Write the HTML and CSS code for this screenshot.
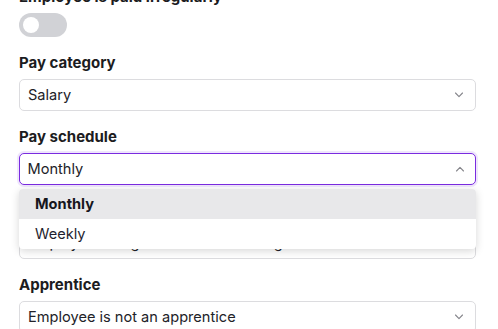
FILE: index.html
```html
<!DOCTYPE html>
<html>
<head>
<meta charset="utf-8">
<link rel="stylesheet" href="styles.css">
</head>
<body>
<div class="form">
  <div class="field">
    <div class="label">Employee is paid irregularly</div>
    <div class="toggle"><span class="knob"></span></div>
  </div>
  <div class="field">
    <div class="label">Pay category</div>
    <div class="select">
      <span class="value">Salary</span>
      <svg class="chev" width="10" height="6" viewBox="0 0 10 6"><path d="M1.5 1 L5 4.6 L8.5 1" fill="none" stroke="#85858b" stroke-width="1.1" stroke-linecap="round" stroke-linejoin="round"/></svg>
    </div>
  </div>
  <div class="field open">
    <div class="label">Pay schedule</div>
    <div class="select focused">
      <span class="value">Monthly</span>
      <svg class="chev" width="10" height="6" viewBox="0 0 10 6"><path d="M1.5 5 L5 1.4 L8.5 5" fill="none" stroke="#85858b" stroke-width="1.1" stroke-linecap="round" stroke-linejoin="round"/></svg>
    </div>
    <div class="menu">
      <div class="option selected">Monthly</div>
      <div class="option">Weekly</div>
    </div>
  </div>
  <div class="field">
    <div class="label">Leave loading</div>
    <div class="select">
      <span class="value">Employee is eligible for leave loading</span>
      <svg class="chev" width="10" height="6" viewBox="0 0 10 6"><path d="M1.5 1 L5 4.6 L8.5 1" fill="none" stroke="#85858b" stroke-width="1.1" stroke-linecap="round" stroke-linejoin="round"/></svg>
    </div>
  </div>
  <div class="field">
    <div class="label">Apprentice</div>
    <div class="select">
      <span class="value">Employee is not an apprentice</span>
      <svg class="chev" width="10" height="6" viewBox="0 0 10 6"><path d="M1.5 1 L5 4.6 L8.5 1" fill="none" stroke="#85858b" stroke-width="1.1" stroke-linecap="round" stroke-linejoin="round"/></svg>
    </div>
  </div>
</div>
</body>
</html>
```
FILE: styles.css
```css
html, body {
  margin: 0;
  padding: 0;
  background: #ffffff;
  overflow: hidden;
}
body {
  font-family: Inter, "Noto Sans", sans-serif;
  color: #1f1f24;
}
.form {
  margin-top: -13px;
  padding: 0 22px 0 19px;
  display: flex;
  flex-direction: column;
  gap: 16px;
}
.field {
  display: flex;
  flex-direction: column;
  gap: 6px;
  position: relative;
}
.label {
  font-size: 15px;
  line-height: 20px;
  font-weight: 700;
  color: #1c1c21;
}
.toggle {
  width: 48px;
  height: 24px;
  border-radius: 12px;
  background: #d1d2d6;
  display: flex;
  align-items: center;
  padding-left: 4px;
  box-sizing: border-box;
}
.knob {
  width: 16px;
  height: 16px;
  border-radius: 50%;
  background: #ffffff;
}
.select {
  height: 32px;
  box-sizing: border-box;
  border: 1px solid #dcdcdf;
  border-radius: 5px;
  display: flex;
  align-items: center;
  justify-content: space-between;
  padding: 0 11px 0 8px;
  font-size: 14.6px;
  color: #222228;
  background: #fff;
}
.select.focused {
  border: 1.5px solid #7a2be0;
  box-shadow: 0 0 0 2px #efe6fc;
  padding-left: 7.5px;
  padding-right: 10.5px;
}
.value {
  white-space: nowrap;
}
.menu {
  position: absolute;
  left: 0;
  right: 0;
  top: 62px;
  background: #ffffff;
  border-radius: 4px;
  box-shadow: 0 2px 8px rgba(0, 0, 0, 0.16);
  z-index: 5;
  overflow: hidden;
}
.option {
  height: 30px;
  display: flex;
  align-items: center;
  padding-left: 16px;
  font-size: 14.6px;
  color: #1f1f30;
}
.option.selected {
  background: #e8e8ea;
  font-weight: 700;
  color: #16161c;
}
```
